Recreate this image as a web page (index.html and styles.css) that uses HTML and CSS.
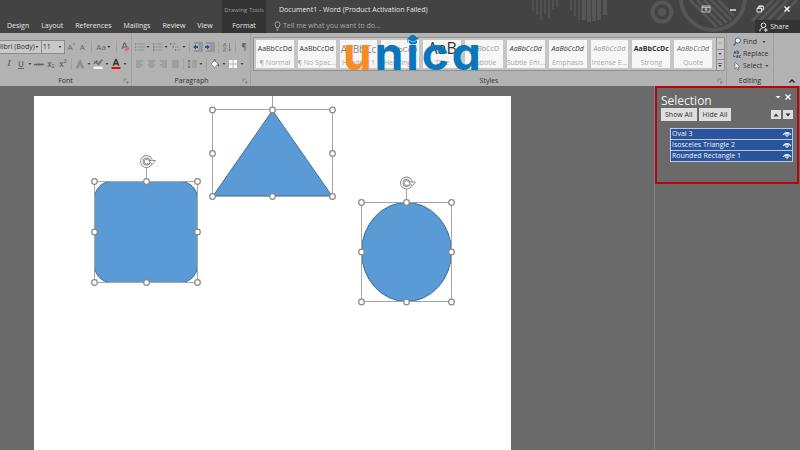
FILE: index.html
```html
<!DOCTYPE html>
<html lang="en">
<head>
<meta charset="utf-8">
<title>Document1 - Word</title>
<link rel="stylesheet" href="styles.css">
</head>
<body>
<svg class="defs" aria-hidden="true">
  <symbol id="caret" viewBox="0 0 6 12"><path d="M1.5 5h3L3 7z" fill="#444"/></symbol>
  <symbol id="launch" viewBox="0 0 6 6"><path d="M1 4V1h3M3 3l2 2M5 3v2H3" fill="none" stroke="#777" stroke-width=".7"/></symbol>
  <symbol id="eye" viewBox="0 0 10 8"><path d="M1 4.800Q5 .4 9 4.800" fill="none" stroke="#fff" stroke-width="1.100"/><circle cx="5" cy="4.900" r="1.300" fill="none" stroke="#fff" stroke-width="1"/></symbol>
</svg>

<header class="header">
  <svg class="decor" width="270" height="33" viewBox="530 0 270 33" aria-hidden="true">
    <g fill="none" stroke="#565656" stroke-width="1.5">
      <path d="M533 0v11M537 0v15M541 0v20M545 0v14M549 0v18M553 0v9M557 0v7"/>
      <path d="M571 0v10M575 0v16M579 0v20"/>
      <path d="M584 0v20M589 0v22M594 0v21M599 0v20M605 0v15" stroke-width="4"/>
      <circle cx="662" cy="12" r="9.500" stroke-width="4"/>
      <circle cx="713" cy="-2" r="32" stroke-width="4"/>
      <path d="M690 0l27 27M697 0l25 25M704 0l23 23M711 0l20 20M718 0l16 16" stroke-width="3"/>
      <path d="M752 21l21-21M760 20l20-20M768 20l20-20M777 20l20-20" stroke-width="3"/>
    </g>
    <circle cx="662" cy="12" r="4" fill="#565656"/>
  </svg>
  <nav class="tabs" aria-label="Ribbon tabs">
    <a href="#">Design</a><a href="#">Layout</a><a href="#">References</a><a href="#">Mailings</a><a href="#">Review</a><a href="#">View</a>
  </nav>
  <div class="context">
    <span class="context-name">Drawing Tools</span>
    <a href="#">Format</a>
  </div>
  <div class="title-area">
    <h1>Document1 - Word (Product Activation Failed)</h1>
    <button class="tell">
      <svg width="7" height="10" viewBox="0 0 7 10"><path d="M2.300 6.500C2 5.300 1 4.800 1 3.300a2.500 2.500 0 0 1 5 0C6 4.800 5 5.300 4.700 6.500zM2.400 8h2.200M2.800 9.300h1.400" fill="none" stroke="#bbb" stroke-width=".8"/></svg>
      Tell me what you want to do...
    </button>
  </div>
  <div class="window-area">
    <div class="window-buttons">
      <button aria-label="Ribbon display options"><svg width="10" height="10" viewBox="0 0 10 10"><path d="M1 2h8v6H1zM1 3.400h8M5 7V4.500M3.700 5.700L5 4.500l1.300 1.200" fill="none" stroke="#ddd" stroke-width=".8"/></svg></button>
      <button aria-label="Minimize"><svg width="10" height="10" viewBox="0 0 10 10"><path d="M2 6h6" stroke="#fff" stroke-width="1.300"/></svg></button>
      <button aria-label="Restore"><svg width="10" height="10" viewBox="0 0 10 10"><path d="M2 4h4.500v4H2zM3.800 4V2h4.500v4H6.500M3.800 2.300h4.500M2 4.300h4.500" fill="none" stroke="#eee" stroke-width=".9"/></svg></button>
      <button aria-label="Close"><svg width="10" height="10" viewBox="0 0 10 10"><path d="M2.500 2.500l5 5M7.500 2.500l-5 5" stroke="#fff" stroke-width="1.300"/></svg></button>
    </div>
    <button class="share">
      <svg width="9" height="10" viewBox="0 0 9 10"><g fill="none" stroke="#eee"><circle cx="4.500" cy="3.300" r="2.300"/><path d="M.8 9.300C1 7 2.300 5.800 4 5.700M5 8h3.600M6.800 6.200v3.600"/></g></svg>
      Share
    </button>
  </div>
</header>

<section class="ribbon" aria-label="Ribbon">
  <div class="group font-group">
    <div class="row">
      <label class="combo combo-name"><select aria-label="Font"><option>libri (Body)</option></select><svg width="6" height="12"><use href="#caret"/></svg></label>
      <label class="combo combo-size"><select aria-label="Font size"><option>11</option></select><svg width="6" height="12"><use href="#caret"/></svg></label>
      <button class="tool glyph">A<sup>^</sup></button>
      <button class="tool glyph">A<sup>ˇ</sup></button>
      <i class="sep"></i>
      <button class="tool wide glyph">Aa<svg width="6" height="12"><use href="#caret"/></svg></button>
      <i class="sep"></i>
      <button class="tool" aria-label="Clear formatting"><svg width="12" height="12" viewBox="0 0 12 12"><path d="M3 8l2.200-6h.9L8 7M3.800 6h3" fill="none" stroke="#555" stroke-width="1"/><path d="M5 8.500L8.500 5 11 7.300 7.500 10.800z" fill="#dc6c80"/></svg></button>
    </div>
    <div class="row row-start">
      <button class="tool glyph italic">I</button>
      <button class="tool glyph under">U</button>
      <button class="drop" aria-label="Underline options"><svg width="6" height="12"><use href="#caret"/></svg></button>
      <button class="tool glyph strike">abc</button>
      <button class="tool glyph strong">x<sub>2</sub></button>
      <button class="tool glyph strong">x<sup>2</sup></button>
      <i class="sep"></i>
      <button class="tool" aria-label="Text effects"><svg width="12" height="12" viewBox="0 0 12 12"><path d="M2.500 10L5.500 2h1l3 8H8L7.200 7.500H4.800L4 10zM5.200 6.300h1.600L6 3.800z" fill="none" stroke="#777" stroke-width=".7"/></svg></button>
      <button class="drop" aria-label="Text effects options"><svg width="6" height="12"><use href="#caret"/></svg></button>
      <button class="tool" aria-label="Highlight"><svg width="12" height="12" viewBox="0 0 12 12"><path d="M5 6.500L9.500 1l1.500 1L7 7.500z" fill="#777"/><path d="M1.500 5.500h1v-2h1v2M4.500 2v3.500h1.500v-2H4.500" fill="none" stroke="#666" stroke-width=".8"/><path d="M1.500 8.500h9v2.500h-9z" fill="#f4f4f4"/></svg></button>
      <button class="drop" aria-label="Highlight options"><svg width="6" height="12"><use href="#caret"/></svg></button>
      <button class="tool" aria-label="Font color"><svg width="12" height="12" viewBox="0 0 12 12"><path d="M3.200 7.700L5.800 1.500h.4l2.600 6.200M4.300 5.700h3.400" fill="none" stroke="#333" stroke-width="1.400"/><path d="M1.500 9h9v2h-9z" fill="#f00"/></svg></button>
      <button class="drop" aria-label="Font color options"><svg width="6" height="12"><use href="#caret"/></svg></button>
    </div>
    <div class="caption">Font<svg class="launch" width="6" height="6"><use href="#launch"/></svg></div>
  </div>

  <div class="group para-group">
    <div class="row">
      <button class="tool" aria-label="Bullets"><svg width="12" height="12" viewBox="0 0 12 12"><path d="M4.500 3h7M4.500 6h7M4.500 9h7" stroke="#8a8a8a" stroke-width=".8"/><path d="M2 3h1.300M2 6h1.300M2 9h1.300" stroke="#5d6b80" stroke-width="1.200"/></svg></button>
      <button class="drop" aria-label="Bullet options"><svg width="6" height="12"><use href="#caret"/></svg></button>
      <button class="tool" aria-label="Numbering"><svg width="12" height="12" viewBox="0 0 12 12"><path d="M4.500 3h7M4.500 6h7M4.500 9h7" stroke="#8a8a8a" stroke-width=".8"/><path d="M2.500 2v2M2 5.200h1v1.600H2M2 8.200h1V10H2" fill="none" stroke="#5d6b80" stroke-width=".6"/></svg></button>
      <button class="drop" aria-label="Numbering options"><svg width="6" height="12"><use href="#caret"/></svg></button>
      <button class="tool" aria-label="Multilevel list"><svg width="12" height="12" viewBox="0 0 12 12"><path d="M3.500 3h4M6 6h4M8.500 9h3" stroke="#8a8a8a" stroke-width=".8"/><path d="M1.700 2v2M4.200 5v2M6.700 8v2" stroke="#5d6b80" stroke-width=".9"/></svg></button>
      <button class="drop" aria-label="Multilevel options"><svg width="6" height="12"><use href="#caret"/></svg></button>
      <i class="sep"></i>
      <button class="tool" aria-label="Decrease indent"><svg width="12" height="12" viewBox="0 0 12 12"><path d="M2 2h9M6.500 4h4.500M6.500 6h4.500M6.500 8h4.500M2 10h9" stroke="#777" stroke-width=".9"/><path d="M6 5H4V3.500L1 6l3 2.500V7h2z" fill="#28589c"/></svg></button>
      <button class="tool" aria-label="Increase indent"><svg width="12" height="12" viewBox="0 0 12 12"><path d="M2 2h9M6.500 4h4.500M6.500 6h4.500M6.500 8h4.500M2 10h9" stroke="#777" stroke-width=".9"/><path d="M1 5h2V3.500L6 6 3 8.500V7H1z" fill="#28589c"/></svg></button>
      <i class="sep"></i>
      <button class="tool" aria-label="Sort"><svg width="12" height="12" viewBox="0 0 12 12"><path d="M2 5.500L3.700 2l1.700 3.500M2.500 4.500h2.300M2.200 7h3L2.200 10h3M8.500 2v8M6.700 8.200L8.500 10l1.800-1.800" fill="none" stroke="#777" stroke-width=".8"/></svg></button>
      <i class="sep"></i>
      <button class="tool glyph strong">¶</button>
    </div>
    <div class="row">
      <button class="tool" aria-label="Align left"><svg width="12" height="12" viewBox="0 0 12 12"><path d="M3 3h7M3 5h5M3 7h7M3 9h5" stroke="#888" stroke-width=".9"/></svg></button>
      <button class="tool" aria-label="Center"><svg width="12" height="12" viewBox="0 0 12 12"><path d="M3 3h7M4 5h5M3 7h7M4 9h5" stroke="#888" stroke-width=".9"/></svg></button>
      <button class="tool" aria-label="Align right"><svg width="12" height="12" viewBox="0 0 12 12"><path d="M3 3h7M5 5h5M3 7h7M5 9h5" stroke="#888" stroke-width=".9"/></svg></button>
      <button class="tool" aria-label="Justify"><svg width="12" height="12" viewBox="0 0 12 12"><path d="M3 3h7M3 5h7M3 7h7M3 9h7" stroke="#888" stroke-width=".9"/></svg></button>
      <i class="sep"></i>
      <button class="tool" aria-label="Line spacing"><svg width="12" height="12" viewBox="0 0 12 12"><path d="M6 3h5M6 5h5M6 7h5M6 9h5" stroke="#888" stroke-width=".8"/><path d="M3 2v8M1.500 3.700L3 2l1.500 1.700M1.500 8.300L3 10l1.500-1.700" fill="none" stroke="#5d6b80" stroke-width=".8"/></svg></button>
      <button class="drop" aria-label="Line spacing options"><svg width="6" height="12"><use href="#caret"/></svg></button>
      <i class="sep"></i>
      <button class="tool" aria-label="Shading"><svg width="12" height="12" viewBox="0 0 12 12"><path d="M2 6l3.500-3.500L9 6 5.500 9.500z" fill="#f6f6f6" stroke="#666" stroke-width=".6"/><path d="M5 4V1.500h1.500V4" fill="none" stroke="#666" stroke-width=".6"/><path d="M9 5.500q2 2 .8 3Q8.500 8 9 5.500z" fill="#444"/></svg></button>
      <button class="drop" aria-label="Shading options"><svg width="6" height="12"><use href="#caret"/></svg></button>
      <button class="tool" aria-label="Borders"><svg width="12" height="12" viewBox="0 0 12 12"><path d="M2 2h8v8H2z" fill="#f6f6f6"/><path d="M6 2v8M2 6h8" stroke="#aaa" stroke-width=".8"/></svg></button>
      <button class="drop" aria-label="Border options"><svg width="6" height="12"><use href="#caret"/></svg></button>
    </div>
    <div class="caption">Paragraph<svg class="launch" width="6" height="6"><use href="#launch"/></svg></div>
  </div>

  <div class="group styles-group">
    <div class="gallery">
      <button class="style"><b>AaBbCcDd</b><span>¶ Normal</span></button>
      <button class="style"><b>AaBbCcDd</b><span>¶ No Spac...</span></button>
      <button class="style heading"><b>AaBbCc</b><span>Heading 1</span></button>
      <button class="style heading small"><b>AaBbCcD</b><span>Heading 2</span></button>
      <button class="style big"><b>AaB</b><span>Title</span></button>
      <button class="style grey"><b>AaBbCcD</b><span>Subtitle</span></button>
      <button class="style slant"><b>AaBbCcDd</b><span>Subtle Em...</span></button>
      <button class="style slant"><b>AaBbCcDd</b><span>Emphasis</span></button>
      <button class="style slant grey"><b>AaBbCcDd</b><span>Intense E...</span></button>
      <button class="style heavy"><b>AaBbCcDc</b><span>Strong</span></button>
      <button class="style slant soft"><b>AaBbCcDd</b><span>Quote</span></button>
      <div class="scroller">
        <button aria-label="Scroll up"><svg width="6" height="6" viewBox="0 0 6 6"><path d="M1.500 4h3L3 2z" fill="#aaa"/></svg></button>
        <button aria-label="Scroll down"><svg width="6" height="6" viewBox="0 0 6 6"><path d="M1.500 2h3L3 4z" fill="#444"/></svg></button>
        <button aria-label="More styles"><svg width="6" height="6" viewBox="0 0 6 6"><path d="M1 1h4v.8H1zM1.200 3h3.600L3 5z" fill="#444"/></svg></button>
      </div>
    </div>
    <div class="caption">Styles<svg class="launch" width="6" height="6"><use href="#launch"/></svg></div>
    <div class="brand"><span class="brand-u">u</span><span>n</span><span class="brand-i">i<svg width="14" height="10" viewBox="0 0 14 10"><path d="M1 3.500L7 1l6 2.500L7 6zM3 5L7 6.600 11 5v3Q7 11 3 8zM1.500 4h.8v3.500h-.8z" fill="#0a76bb"/><path d="M3.200 5.400L7 7l3.800-1.600" fill="none" stroke="#dce8f0" stroke-width=".6"/></svg></span><span>c</span><span>a</span></div>
  </div>

  <div class="group edit-group">
    <button class="command"><svg width="8" height="10" viewBox="0 0 8 10"><circle cx="4.800" cy="3.500" r="2.600" fill="#eef5fb" stroke="#2d66a5"/><path d="M3 5.500L.6 8.600" stroke="#2d66a5" stroke-width="1.300"/></svg>Find<svg class="gap" width="6" height="12"><use href="#caret"/></svg></button>
    <button class="command"><svg width="8" height="10" viewBox="0 0 8 10"><path d="M1 2.500h1.500v2H1v-1h1.500M4 1v3.500h1.500v-2H4M3.500 6.500H5v2H3.500v-1H5M8 6.500H6.500v2H8M.6 5.500v2h2" fill="none" stroke="#3e5878" stroke-width=".8"/></svg>Replace</button>
    <button class="command"><svg width="8" height="10" viewBox="0 0 8 10"><path d="M2 1v7l1.700-1.500L5 9.200l1-.5-1.200-2.500H7z" fill="#f4f4f4" stroke="#666" stroke-width=".7"/></svg>Select<svg width="6" height="12"><use href="#caret"/></svg></button>
    <div class="caption">Editing</div>
  </div>
  <div class="collapse"><button aria-label="Collapse the ribbon"><svg width="8" height="8" viewBox="0 0 8 8"><path d="M1.500 5.500L4 3l2.500 2.500" fill="none" stroke="#222" stroke-width="1.300"/></svg></button></div>
</section>

<div class="workspace">
  <main class="document">
    <div class="page">
      <svg class="drawing" width="477" height="354" viewBox="34 96 477 354" role="img" aria-label="Triangle, rounded rectangle and oval">
        <defs>
          <g id="rotate">
            <circle r="4.700" fill="none" stroke="#888" stroke-width="3.400"/>
            <circle r="4.700" fill="none" stroke="#fff" stroke-width="1.600"/>
            <path d="M2.500-1H9L5.500 3z" fill="#fff" stroke="#888" stroke-width=".9"/>
            <path d="M1.600 1.800A2.300 2.300 0 1 1 2.200-.8" fill="none" stroke="#888" stroke-width=".9"/>
          </g>
        </defs>
        <g fill="#5b9bd5" stroke="#416f9c" stroke-width="1">
          <path d="M272.500 110.500L332 196H213z"/>
          <rect x="94.500" y="181.500" width="103" height="101" rx="17"/>
          <ellipse cx="406.500" cy="252" rx="45" ry="49.500"/>
        </g>
        <g fill="none" stroke="#a5a5a5">
          <path d="M212.500 109.500h120v87h-120zM272.500 96v14"/>
          <path d="M94.500 181.500h103v101h-103zM146.500 166v15"/>
          <path d="M361.500 202.500h90v99h-90zM406.500 188v14"/>
        </g>
        <g fill="#fff" stroke="#888" stroke-width="1.200">
          <circle cx="212.500" cy="110" r="2.800"/><circle cx="272.500" cy="110" r="2.800"/><circle cx="332.500" cy="110" r="2.800"/>
          <circle cx="212.500" cy="153.500" r="2.800"/><circle cx="332.500" cy="153.500" r="2.800"/>
          <circle cx="212.500" cy="196.500" r="2.800"/><circle cx="272.500" cy="196.500" r="2.800"/><circle cx="332.500" cy="196.500" r="2.800"/>
          <circle cx="94.500" cy="181.500" r="2.800"/><circle cx="146.500" cy="181.500" r="2.800"/><circle cx="197.500" cy="181.500" r="2.800"/>
          <circle cx="94.500" cy="232" r="2.800"/><circle cx="197.500" cy="232" r="2.800"/>
          <circle cx="94.500" cy="282.500" r="2.800"/><circle cx="146.500" cy="282.500" r="2.800"/><circle cx="197.500" cy="282.500" r="2.800"/>
          <circle cx="361.500" cy="202.500" r="2.800"/><circle cx="406.500" cy="202.500" r="2.800"/><circle cx="451.500" cy="202.500" r="2.800"/>
          <circle cx="361.500" cy="252" r="2.800"/><circle cx="451.500" cy="252" r="2.800"/>
          <circle cx="361.500" cy="302" r="2.800"/><circle cx="406.500" cy="302" r="2.800"/><circle cx="451.500" cy="302" r="2.800"/>
        </g>
        <use href="#rotate" x="146.500" y="161.500"/>
        <use href="#rotate" x="406.500" y="183"/>
      </svg>
    </div>
  </main>
  <aside class="pane">
    <div class="frame">
      <div class="pane-head">
        <h2>Selection</h2>
        <button aria-label="Pane options"><svg width="10" height="8" viewBox="0 0 10 8"><path d="M2.500 3h5L5 5.500z" fill="#eee"/></svg></button>
        <button aria-label="Close pane"><svg width="10" height="8" viewBox="0 0 10 8"><path d="M2.500 1.500l5 5M7.500 1.500l-5 5" stroke="#fff" stroke-width="1.300"/></svg></button>
      </div>
      <div class="pane-tools">
        <button>Show All</button>
        <button>Hide All</button>
        <span class="order">
          <button aria-label="Bring forward"><svg width="8" height="8" viewBox="0 0 8 8"><path d="M1.500 5.500h5L4 2.500z" fill="#333"/></svg></button>
          <button aria-label="Send backward"><svg width="8" height="8" viewBox="0 0 8 8"><path d="M1.500 2.500h5L4 5.500z" fill="#333"/></svg></button>
        </span>
      </div>
      <ul class="objects">
        <li>Oval 3<svg width="10" height="8"><use href="#eye"/></svg></li>
        <li>Isosceles Triangle 2<svg width="10" height="8"><use href="#eye"/></svg></li>
        <li>Rounded Rectangle 1<svg width="10" height="8"><use href="#eye"/></svg></li>
      </ul>
    </div>
  </aside>
</div>
</body>
</html>
```
FILE: styles.css
```css
* { box-sizing: border-box; }

body {
  margin: 0;
  min-height: 100vh;
  display: flex;
  flex-direction: column;
  background: #6a6a6a;
  color: #333;
  font: 7px/10px "Open Sans", "Noto Sans", sans-serif;
}

button, select {
  margin: 0;
  padding: 0;
  border: 0;
  background: none;
  color: inherit;
  font: inherit;
}

a { color: inherit; text-decoration: none; }
svg { display: block; flex: none; }
.defs { position: absolute; width: 0; height: 0; }

/* Title bar and tabs */
.header {
  position: relative;
  display: flex;
  min-height: 33px;
  background: #434343;
  color: #e6e6e6;
}
.decor { position: absolute; top: 0; right: 0; }
.tabs {
  display: flex;
  align-items: flex-end;
  gap: 12px;
  width: 222px;
  padding: 0 0 2px 7px;
}
.context {
  display: flex;
  flex-direction: column;
  align-items: center;
  justify-content: space-between;
  width: 44px;
  padding: 5px 0 2px;
  background: #343434;
}
.context-name { color: #9a9a9a; font-size: 6px; white-space: nowrap; }
.title-area {
  flex: 1;
  display: flex;
  flex-direction: column;
  justify-content: space-between;
  align-items: flex-start;
  padding: 5px 0 2px 8px;
}
.title-area h1 { margin: 0 0 0 5px; font: inherit; }
.tell { display: flex; align-items: center; gap: 2px; color: #a8a8a8; }
.window-area {
  position: relative;
  display: flex;
  flex-direction: column;
  justify-content: space-between;
  align-items: flex-end;
}
.window-buttons { display: flex; gap: 17px; padding: 4px 8px 0 0; }
.share {
  display: flex;
  align-items: center;
  gap: 2px;
  height: 13px;
  padding: 0 11px 0 4px;
  background: #343434;
}

/* Ribbon */
.ribbon {
  display: flex;
  min-height: 53px;
  background: #b2b2b2;
}
.group {
  position: relative;
  display: flex;
  flex-direction: column;
  padding: 5px 0 0;
  border-right: 1px solid #a0a0a0;
}
.font-group { width: 132px; }
.para-group { width: 119px; padding-left: 1px; }
.styles-group { flex: 1; min-width: 0; padding: 4px 1px 0 2px; border-right: 0; }
.edit-group { width: 48px; padding-top: 3px; border-left: 1px solid #a0a0a0; }
.row { display: flex; align-items: center; height: 17px; }
.row-start { padding-left: 3px; }
.caption {
  position: relative;
  margin-top: auto;
  height: 10px;
  line-height: 9px;
  text-align: center;
}
.launch { position: absolute; right: 2px; bottom: 2px; }
.tool {
  display: flex;
  align-items: center;
  justify-content: center;
  width: 12px;
  height: 14px;
}
.wide { width: 20px; }
.drop { width: 6px; }
.sep { width: 1px; height: 12px; margin: 0 2px; background: #a2a2a2; }
.glyph { color: #666; font-size: 8px; }
.glyph sup, .glyph sub { font-size: 5px; line-height: 5px; }
.glyph sup { padding-bottom: 4px; }
.glyph sub { padding-top: 5px; }
.italic { font: italic bold 8px/10px "Liberation Serif", serif; }
.under { font-weight: 600; text-decoration: underline; }
.strike { font-size: 6px; text-decoration: line-through; }
.strong { font-weight: 600; }
.combo {
  position: relative;
  display: flex;
  align-items: center;
  height: 14px;
  border: 1px solid #8c8c8c;
  background: #c9c9c9;
}
.combo-name { width: 42px; border-left: 0; }
.combo-size { width: 24px; border-left: 0; padding-left: 1px; }
.combo select { appearance: none; width: 100%; }
.combo svg { position: absolute; right: 1px; }

/* Style gallery */
.gallery {
  display: grid;
  grid-template-columns: repeat(11, minmax(0, 1fr)) 8px;
  gap: 4px;
  height: 34px;
  padding-left: 2px;
  border: 1px solid #929292;
  background: #c6c6c6;
}
.style {
  display: flex;
  flex-direction: column;
  justify-content: space-between;
  align-items: center;
  margin: 2px 0;
  padding: 4px 0 0;
  overflow: hidden;
  background: #f6f6f6;
  color: #333;
  white-space: nowrap;
}
.style b { font-weight: 400; }
.style span { color: #aaa; }
.heading b { color: #888; font-size: 10px; }
.small b { font-size: 8px; }
.big { padding-top: 0; }
.big b { font-size: 16px; line-height: 16px; }
.grey b { color: #999; }
.slant b { font-style: italic; }
.heavy b { font-weight: 700; }
.soft b { color: #666; }
.scroller { display: grid; grid-template-rows: repeat(3, 1fr); border-left: 1px solid #929292; }
.scroller button + button { border-top: 1px solid #929292; }
.scroller button { display: flex; align-items: center; justify-content: center; }

.brand {
  position: absolute;
  left: 92px;
  top: -8px;
  display: flex;
  gap: 3px;
  color: #0a76bb;
  font: 700 46px/56px Inter, sans-serif;
  font-feature-settings: "cv11";
  white-space: nowrap;
  pointer-events: none;
}
.brand-u { color: #f68b28; }
.brand-i { position: relative; }
.brand-i svg { position: absolute; left: 0; top: 10px; }

/* Editing */
.command {
  display: flex;
  align-items: center;
  gap: 2px;
  height: 12px;
  padding-left: 6px;
}
.gap { margin-left: 2px; }
.collapse { display: flex; align-items: flex-end; justify-content: flex-end; width: 26px; padding: 0 4px 1px 0; }

/* Document */
.workspace { flex: 1; display: flex; }
.document { flex: 1; display: flex; padding: 10px 34px 0; }
.page { flex: 1; max-width: 477px; background: #fff; }

/* Selection pane */
.pane { width: 146px; padding-right: 1px; border-left: 1px solid #858585; }
.frame {
  min-height: 97px;
  padding: 5px 4px 20px 4px;
  border: 2px solid #b5060f;
  color: #f0f0f0;
}
.pane-head { display: flex; align-items: flex-start; }
.pane-head h2 { flex: 1; margin: 0; font-size: 12px; line-height: 15px; font-weight: 400; }
.pane-tools { display: flex; gap: 2px; }
.pane-tools button { height: 13px; padding: 0 4px; background: #dedede; color: #333; }
.order { display: flex; gap: 2px; align-items: center; margin-left: auto; }
.pane-tools .order button { height: 9px; padding: 0 1px; }
.objects {
  margin: 7px 0 0 9px;
  padding: 1px;
  display: grid;
  gap: 1px;
  list-style: none;
  background: #b9c8e4;
}
.objects li {
  display: flex;
  align-items: center;
  justify-content: space-between;
  height: 10px;
  padding-left: 1px;
  background: #2a549c;
}
```
